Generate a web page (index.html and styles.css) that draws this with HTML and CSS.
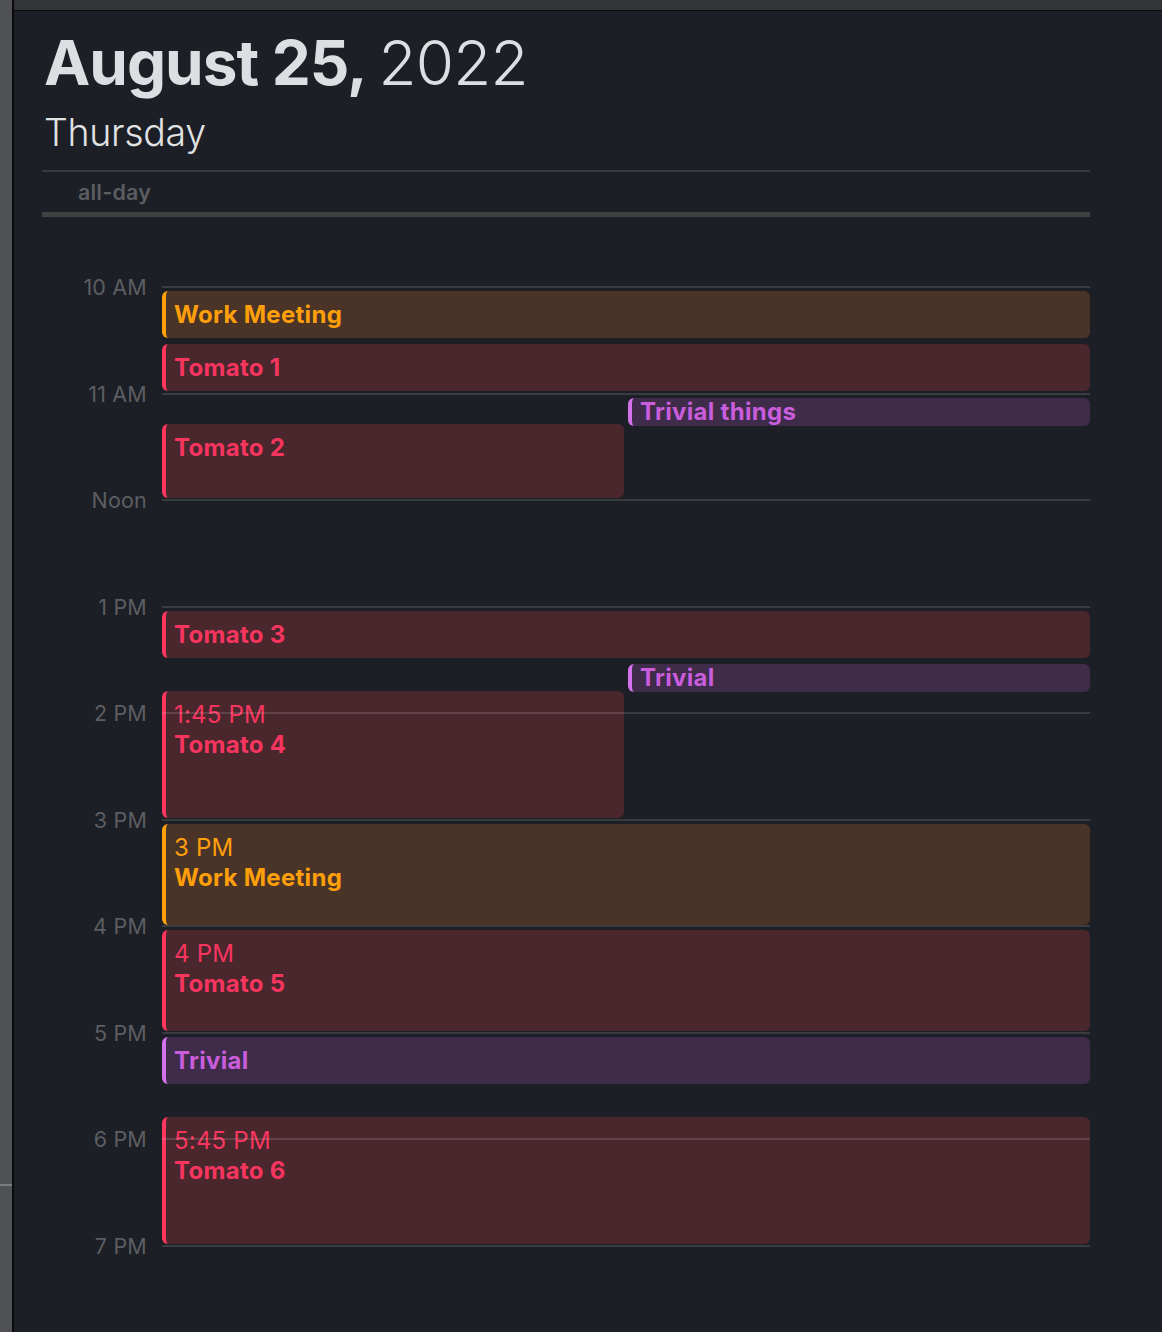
FILE: index.html
```html
<!DOCTYPE html>
<html lang="en">
<head>
<meta charset="utf-8">
<title>August 25, 2022</title>
<link rel="stylesheet" href="styles.css">
</head>
<body>
<div class="app">
  <aside class="sidebar"><div class="sidebar-mark"></div></aside>
  <main class="main">
    <div class="toolbar"></div>
    <section class="day">
      <header class="day-head">
        <h1 class="date"><span class="date-strong">August 25,</span> <span class="date-year">2022</span></h1>
        <div class="weekday">Thursday</div>
      </header>
      <div class="allday"><span class="allday-label">all-day</span></div>
      <div class="timeline">
        <div class="events">
          <div class="event orange full" style="top:5px;height:47px"><div class="ev-title">Work Meeting</div></div>
          <div class="event red full" style="top:58px;height:47px"><div class="ev-title">Tomato 1</div></div>
          <div class="event purple right short" style="top:112px;height:28px"><div class="ev-title">Trivial things</div></div>
          <div class="event red left" style="top:138px;height:74px"><div class="ev-title">Tomato 2</div></div>
          <div class="event red full" style="top:325px;height:47px"><div class="ev-title">Tomato 3</div></div>
          <div class="event purple right short" style="top:378px;height:28px"><div class="ev-title">Trivial</div></div>
          <div class="event red left" style="top:405px;height:127px"><div class="ev-time">1:45 PM</div><div class="ev-title">Tomato 4</div></div>
          <div class="event orange full" style="top:538px;height:101px"><div class="ev-time">3 PM</div><div class="ev-title">Work Meeting</div></div>
          <div class="event red full" style="top:644px;height:101px"><div class="ev-time">4 PM</div><div class="ev-title">Tomato 5</div></div>
          <div class="event purple full" style="top:751px;height:47px"><div class="ev-title">Trivial</div></div>
          <div class="event red full" style="top:831px;height:127px"><div class="ev-time">5:45 PM</div><div class="ev-title">Tomato 6</div></div>
        </div>
        <div class="hours">
          <div class="hour"><span class="hour-label">10 AM</span><span class="hour-rule"></span></div>
          <div class="hour"><span class="hour-label">11 AM</span><span class="hour-rule"></span></div>
          <div class="hour"><span class="hour-label">Noon</span><span class="hour-rule"></span></div>
          <div class="hour"><span class="hour-label">1 PM</span><span class="hour-rule"></span></div>
          <div class="hour"><span class="hour-label">2 PM</span><span class="hour-rule"></span></div>
          <div class="hour"><span class="hour-label">3 PM</span><span class="hour-rule"></span></div>
          <div class="hour"><span class="hour-label">4 PM</span><span class="hour-rule"></span></div>
          <div class="hour"><span class="hour-label">5 PM</span><span class="hour-rule"></span></div>
          <div class="hour"><span class="hour-label">6 PM</span><span class="hour-rule"></span></div>
          <div class="hour last"><span class="hour-label">7 PM</span><span class="hour-rule"></span></div>
        </div>
      </div>
    </section>
  </main>
</div>
</body>
</html>
```

FILE: styles.css
```css
* { box-sizing: border-box; }

html, body {
  margin: 0;
  padding: 0;
  height: 100%;
  background: #1c1f25;
  overflow: hidden;
}

body {
  font-family: Inter, "Noto Sans", "DejaVu Sans", sans-serif;
  color: #dcdde0;
}

.app {
  display: flex;
  height: 1332px;
}

.sidebar {
  width: 14px;
  flex: none;
  background: #505154;
  border-right: 2px solid #0b0b0c;
  padding-top: 1184px;
}

.sidebar-mark {
  height: 2px;
  background: #7b7c7f;
}

.main {
  flex: 1;
  display: flex;
  flex-direction: column;
  min-width: 0;
}

.toolbar {
  height: 11px;
  flex: none;
  background: #333438;
  border-bottom: 1px solid #0b0b0c;
}

.day {
  padding-left: 28px;
  width: 1076px;
}

.day-head {
  padding-top: 20px;
  padding-left: 2px;
}

.date {
  margin: 0;
  font-size: 62px;
  line-height: 64px;
  letter-spacing: -1px;
  color: #dddee1;
  font-weight: 700;
}

.date-year {
  font-weight: 300;
  letter-spacing: -0.8px;
}

.weekday {
  margin-top: 19px;
  font-size: 37.5px;
  line-height: 38px;
  font-weight: 300;
  color: #e1e2e4;
  letter-spacing: -0.3px;
}

.allday {
  margin-top: 18px;
  border-top: 2px solid #3a3b3e;
  border-bottom: 5px solid #404143;
  height: 47px;
  display: flex;
  align-items: center;
  padding-left: 36px;
}

.allday-label {
  font-size: 21.5px;
  font-weight: 600;
  color: #5b5d61;
  letter-spacing: 0.2px;
}

.timeline {
  position: relative;
  padding-top: 69px;
  --hour: 106.56px;
}

.events {
  position: absolute;
  top: 69px;
  left: 120px;
  width: 928px;
  height: 1000px;
  z-index: 0;
}

.event {
  position: absolute;
  border-left: 4px solid;
  border-radius: 6px;
  padding: 9px 8px 0;
  overflow: hidden;
  font-size: 24px;
  line-height: 30px;
}

.event.full { left: 0; width: 928px; }
.event.left { left: 0; width: 462px; }
.event.right { left: 466px; width: 462px; }

.event.short {
  padding-top: 0;
  line-height: 28px;
}

.ev-title { font-weight: 700; letter-spacing: 0.3px; }
.ev-time { font-weight: 400; letter-spacing: 0.2px; }

.event.orange { background: #4a3428; border-left-color: #ff9f0a; color: #ff9f0a; }
.event.red { background: #4a262d; border-left-color: #ff375f; color: #f7355f; }
.event.purple { background: #3f2c4b; border-left-color: #d372ea; color: #c95ddc; }

.hours {
  position: relative;
  z-index: 1;
}

.hour {
  display: flex;
  align-items: flex-start;
  height: var(--hour);
}

.hour.last { height: 60px; }

.hour-label {
  width: 105px;
  flex: none;
  margin-top: -12px;
  text-align: right;
  font-size: 21.5px;
  line-height: 26px;
  color: #5c5e62;
  letter-spacing: 0.2px;
}

.hour-rule {
  flex: 1;
  margin-left: 15px;
  height: 2px;
  background: rgba(255, 255, 255, 0.13);
}
```
